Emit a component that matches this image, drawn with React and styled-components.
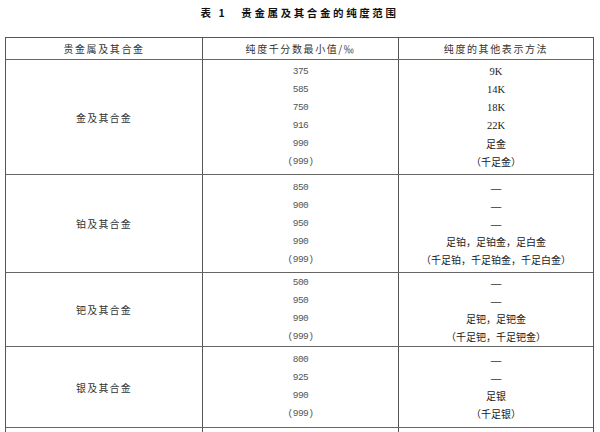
import React from "react";
import styled, { createGlobalStyle } from "styled-components";

const GlobalStyle = createGlobalStyle`
  html, body {
    margin: 0;
    padding: 0;
    background: #fff;
  }
  body {
    width: 600px;
    height: 432px;
    overflow: hidden;
    font-family: "Noto Sans CJK SC", "Liberation Sans", sans-serif;
    color: #222;
  }
`;

const groups = [
  {
    metal: "金及其合金",
    height: 115,
    rows: [
      ["375", "9K", "k"],
      ["585", "14K", "k"],
      ["750", "18K", "k"],
      ["916", "22K", "k"],
      ["990", "足金"],
      ["(999)", "（千足金）"],
    ],
  },
  {
    metal: "铂及其合金",
    height: 98,
    rows: [
      ["850", "—", "dash"],
      ["900", "—", "dash"],
      ["950", "—", "dash"],
      ["990", "足铂，足铂金，足白金"],
      ["(999)", "（千足铂，千足铂金，千足白金）"],
    ],
  },
  {
    metal: "钯及其合金",
    height: 74,
    rows: [
      ["500", "—", "dash"],
      ["950", "—", "dash"],
      ["990", "足钯，足钯金"],
      ["(999)", "（千足钯，千足钯金）"],
    ],
  },
  {
    metal: "银及其合金",
    height: 81,
    rows: [
      ["800", "—", "dash"],
      ["925", "—", "dash"],
      ["990", "足银"],
      ["(999)", "（千足银）"],
    ],
  },
];

const App = () => {
  return (
    <Page>
      <GlobalStyle />
      <Title>
        <span>表 1</span>
        <span>贵金属及其合金的纯度范围</span>
      </Title>
      <Table>
        <Row $height={22}>
          <HeadCell>贵金属及其合金</HeadCell>
          <HeadCell>纯度千分数最小值/‰</HeadCell>
          <HeadCell>纯度的其他表示方法</HeadCell>
        </Row>
        {groups.map((g) => (
          <Row key={g.metal} $height={g.height}>
            <Cell>
              <Label>{g.metal}</Label>
            </Cell>
            <Cell>
              {g.rows.map((r, i) => (
                <Num key={i}>{r[0]}</Num>
              ))}
            </Cell>
            <Cell>
              {g.rows.map((r, i) => (
                <Other key={i} $kind={r[2]}>
                  {r[1]}
                </Other>
              ))}
            </Cell>
          </Row>
        ))}
        <Row $height={10}>
          <Cell />
          <Cell />
          <Cell />
        </Row>
      </Table>
    </Page>
  );
};

const Page = styled.div`
  padding: 4px 6px 0 5px;
`;

const Title = styled.div`
  display: flex;
  justify-content: center;
  gap: 14px;
  height: 33px;
  padding-top: 2px;
  box-sizing: border-box;
  font-size: 10.5px;
  font-weight: bold;
  letter-spacing: 2.6px;
  color: #111;
  line-height: 14px;
`;

const Table = styled.div`
  border-top: 1.5px solid #555;
  border-left: 1.5px solid #555;
  border-right: 1.5px solid #555;
`;

const Row = styled.div`
  display: grid;
  grid-template-columns: 196px 196px 1fr;
  height: ${({ $height }) => $height}px;
  border-bottom: 1px solid #666;
  box-sizing: border-box;
`;

const Cell = styled.div`
  display: flex;
  flex-direction: column;
  align-items: center;
  justify-content: center;
  border-left: 1px solid #555;
  &:first-child {
    border-left: none;
  }
`;

const HeadCell = styled(Cell)`
  font-size: 10px;
  letter-spacing: 1.6px;
  color: #333;
`;

const Label = styled.div`
  font-size: 10px;
  letter-spacing: 1.2px;
  color: #333;
`;

const Num = styled.div`
  font-family: "Liberation Mono", monospace;
  font-size: 9.5px;
  letter-spacing: -0.5px;
  line-height: 18px;
  color: #555;
`;

const Other = styled.div`
  line-height: 18px;
  font-size: 10px;
  color: #222;
  font-family: ${({ $kind }) =>
    $kind === "k"
      ? '"Liberation Serif", serif'
      : '"Noto Sans CJK SC", sans-serif'};
  ${({ $kind }) => $kind === "k" && "font-size: 10.5px;"}
  ${({ $kind }) => $kind === "dash" && "font-size: 13px; color: #333;"}
`;

export default App;
